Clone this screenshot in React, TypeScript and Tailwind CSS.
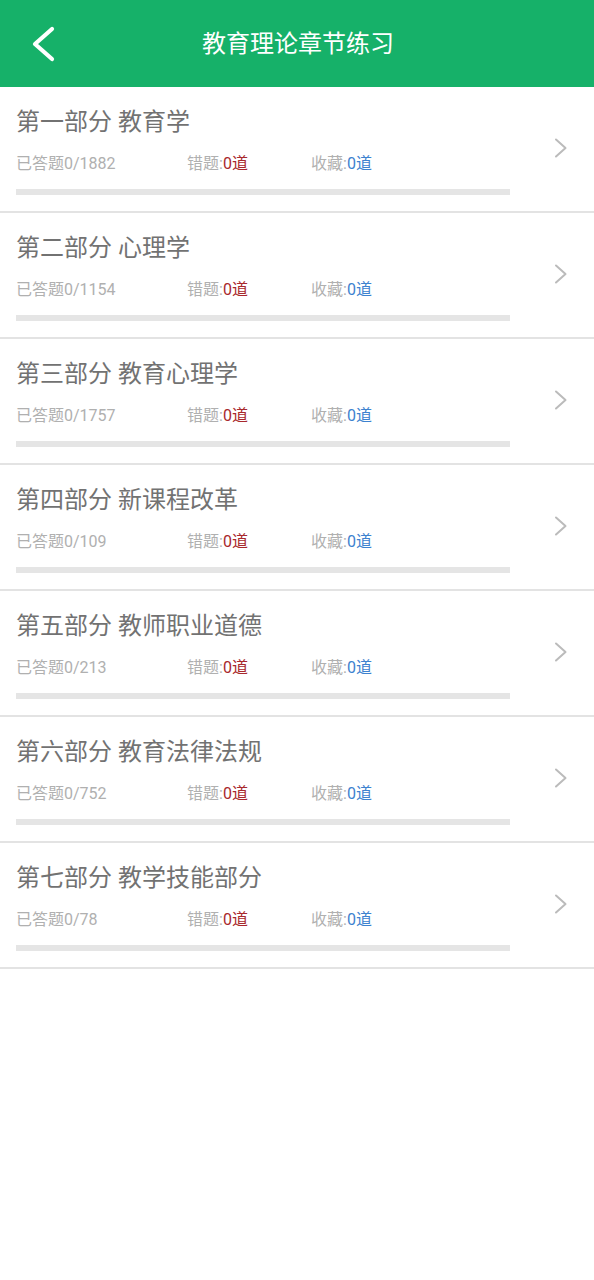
import React from "react";

const rows = [
  { title: "第一部分 教育学", total: 1882 },
  { title: "第二部分 心理学", total: 1154 },
  { title: "第三部分 教育心理学", total: 1757 },
  { title: "第四部分 新课程改革", total: 109 },
  { title: "第五部分 教师职业道德", total: 213 },
  { title: "第六部分 教育法律法规", total: 752 },
  { title: "第七部分 教学技能部分", total: 78 },
];

export default function App() {
  return (
    <div
      className="w-[594px] min-h-[1280px] bg-white"
      style={{ fontFamily: 'Roboto, "Noto Sans CJK SC", "Noto Sans", sans-serif' }}
    >
      <div className="h-[87px] bg-[#16b169] flex items-center relative">
        <svg
          className="absolute left-[28px] top-[22px]"
          width="30"
          height="44"
          viewBox="0 0 30 44"
        >
          <path
            d="M24 7 L7 22 L24 37"
            fill="none"
            stroke="white"
            strokeWidth="4.2"
            strokeLinecap="round"
            strokeLinejoin="round"
          />
        </svg>
        <div className="flex-1 text-center text-white text-[24px] leading-[30px] pl-[2px]">
          教育理论章节练习
        </div>
      </div>
      {rows.map((r) => (
        <div
          key={r.title}
          className="h-[126px] border-b-2 border-[#e3e3e3] flex items-start relative"
        >
          <div className="flex-1 pl-[16px]">
            <div className="mt-[19px] h-[32px] text-[24px] leading-[32px] text-[#727272]">
              {r.title}
            </div>
            <div className="mt-[16px] h-[20px] flex text-[16px] leading-[20px] text-[#b0b0b0]">
              <div className="w-[171px]">已答题0/{r.total}</div>
              <div className="w-[124px]">
                错题:<span className="text-[#a8282c]">0道</span>
              </div>
              <div>
                收藏:<span className="text-[#3d82cf]">0道</span>
              </div>
            </div>
            <div className="mt-[15px] h-[6px] w-[494px] bg-[#e5e5e5]" />
          </div>
          <svg
            className="absolute left-[552px] top-[50px]"
            width="18"
            height="22"
            viewBox="0 0 18 22"
          >
            <path
              d="M4 2.5 L13.5 11 L4 19.5"
              fill="none"
              stroke="#bbbbbb"
              strokeWidth="2"
              strokeLinecap="round"
              strokeLinejoin="round"
            />
          </svg>
        </div>
      ))}
    </div>
  );
}
